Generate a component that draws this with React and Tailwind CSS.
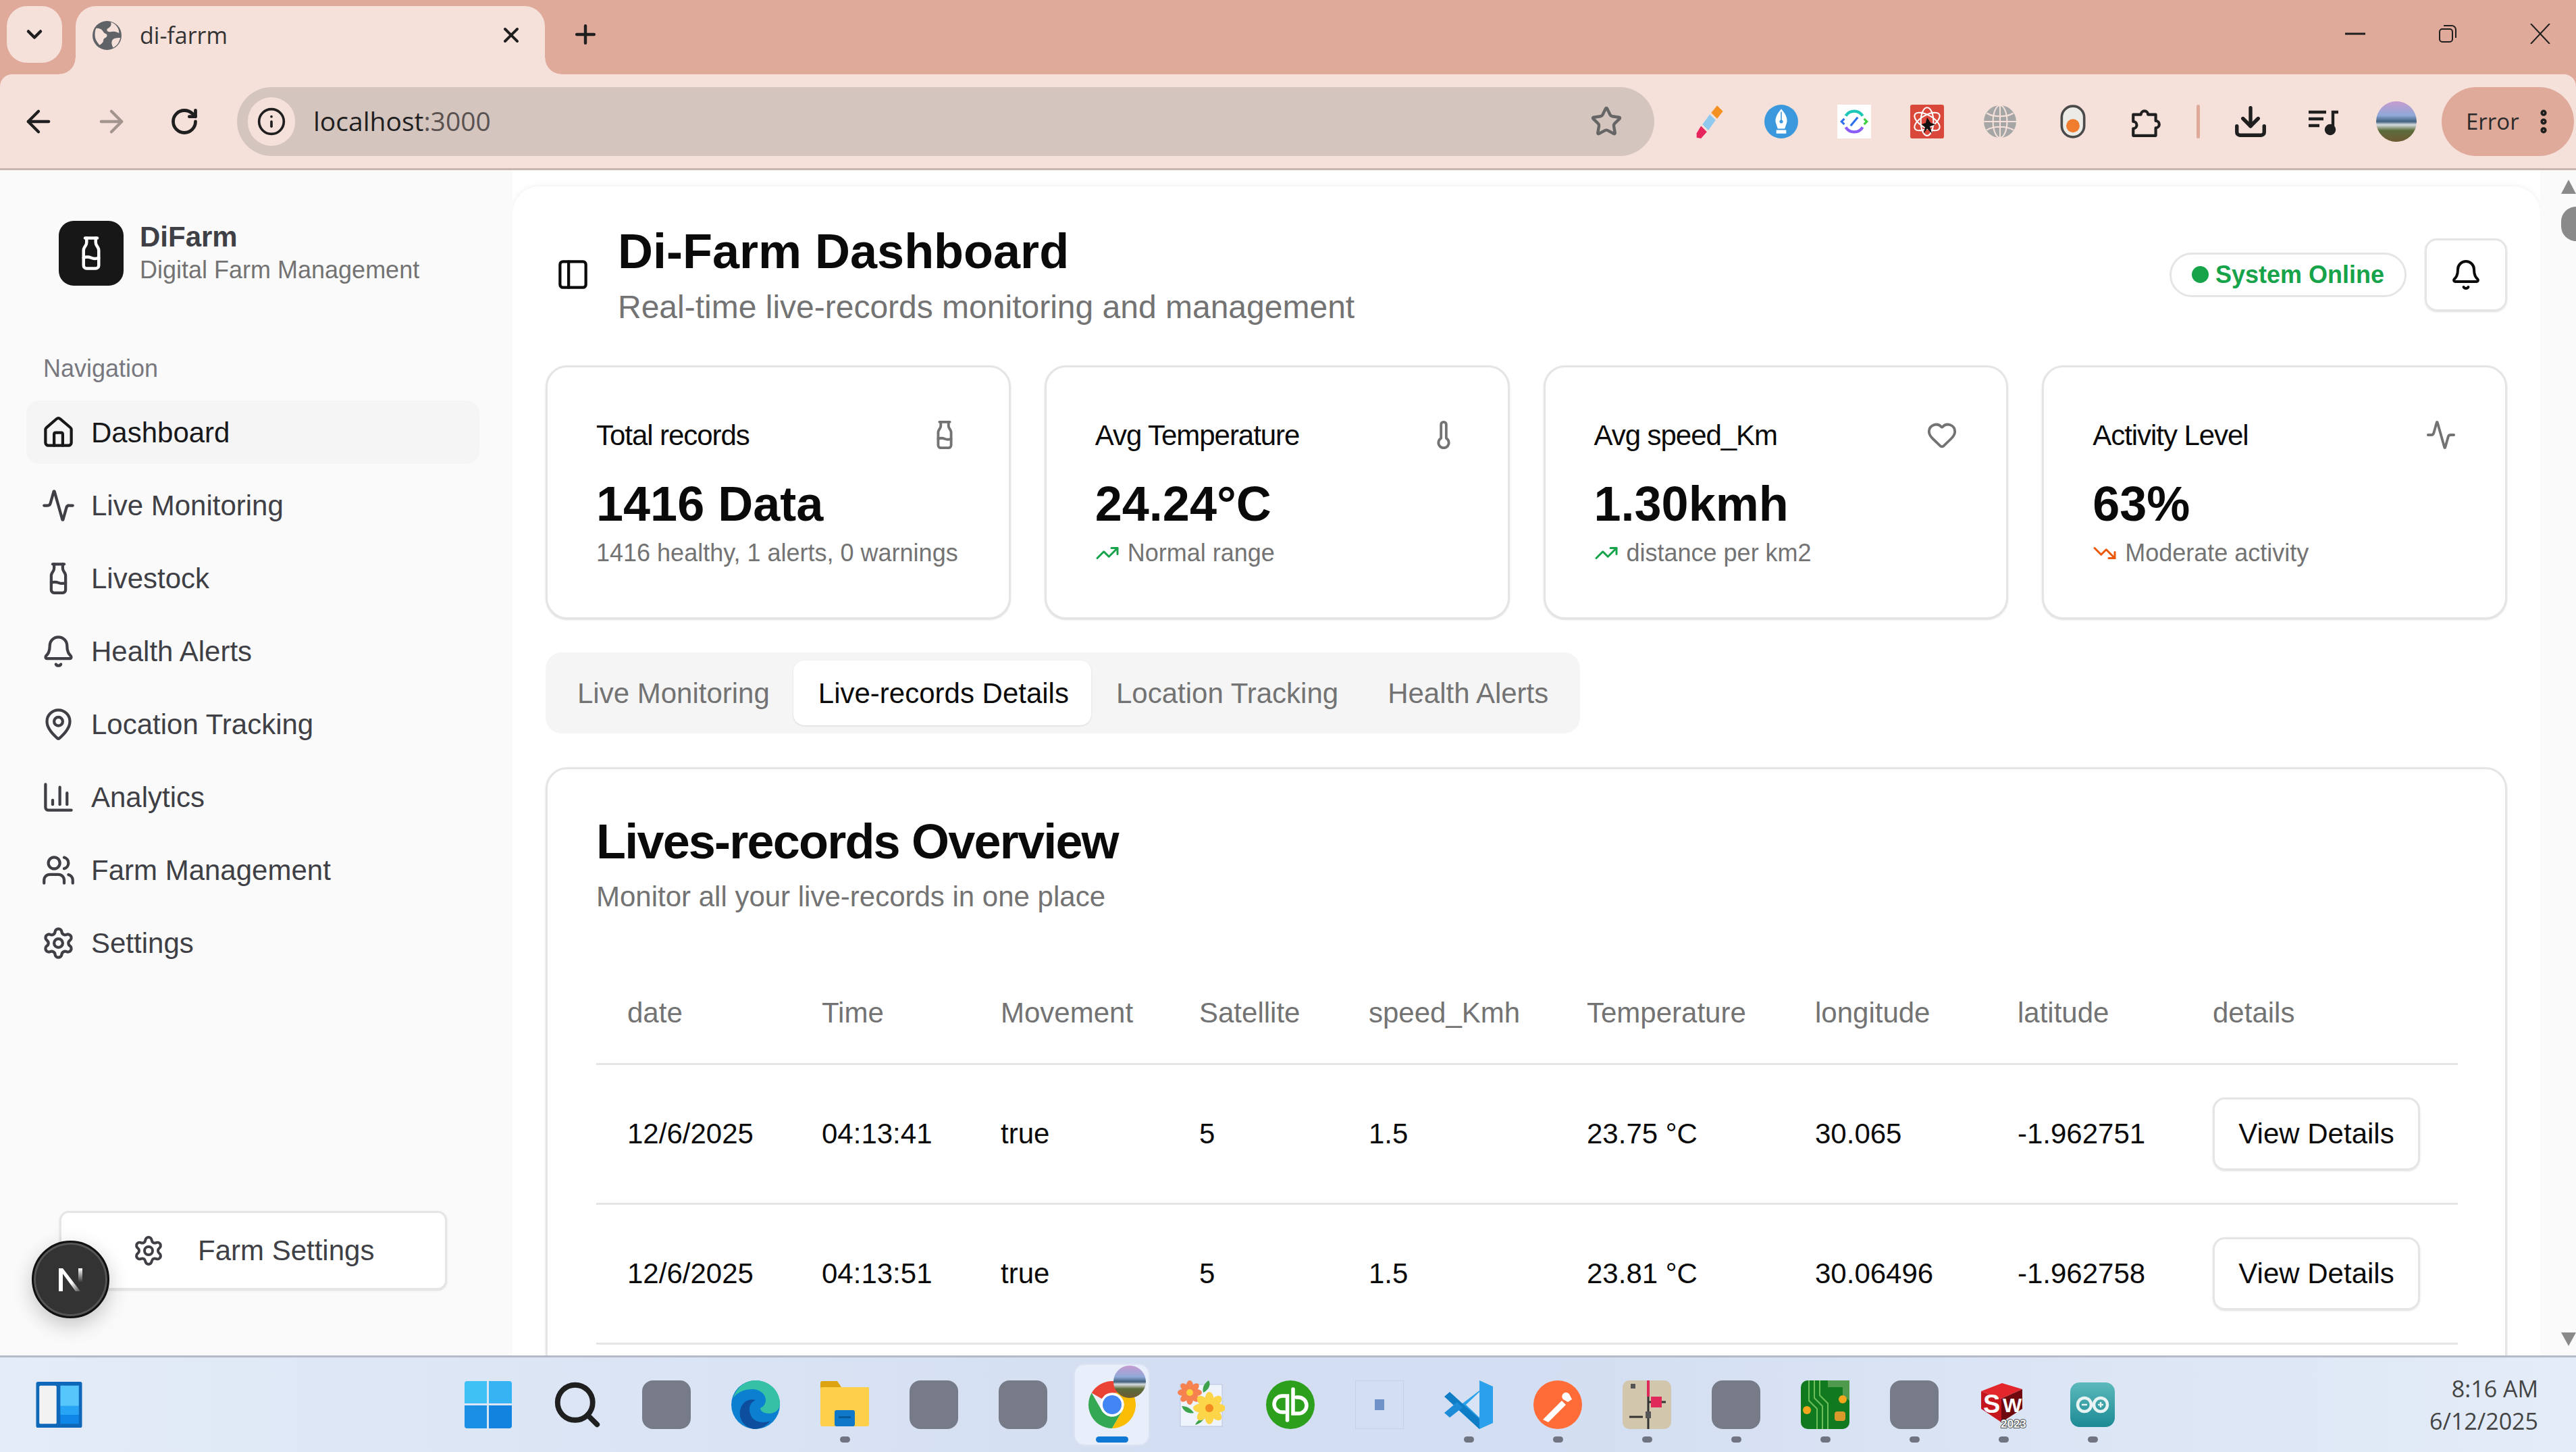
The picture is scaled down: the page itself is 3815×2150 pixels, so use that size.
import {
  Activity,
  ArrowLeft,
  ArrowRight,
  Bell,
  ChartColumn,
  ChevronDown,
  Download,
  EllipsisVertical,
  Heart,
  House,
  Info,
  MapPin,
  Milk,
  PanelLeft,
  Plus,
  RotateCw,
  Search,
  Settings,
  Star,
  Thermometer,
  TrendingDown,
  TrendingUp,
  Users,
  X,
} from "lucide-react";

const navItems = [
  { label: "Dashboard", icon: House, active: true },
  { label: "Live Monitoring", icon: Activity },
  { label: "Livestock", icon: Milk },
  { label: "Health Alerts", icon: Bell },
  { label: "Location Tracking", icon: MapPin },
  { label: "Analytics", icon: ChartColumn },
  { label: "Farm Management", icon: Users },
  { label: "Settings", icon: Settings },
];

const rows = [
  ["12/6/2025", "04:13:41", "true", "5", "1.5", "23.75 °C", "30.065", "-1.962751"],
  ["12/6/2025", "04:13:51", "true", "5", "1.5", "23.81 °C", "30.06496", "-1.962758"],
];

// chrome bits
const ChromeLogo = ({ className }) => (
  <svg viewBox="0 0 48 48" className={className}>
    <path d="M6.68 14A20 20 0 0 1 41.32 14H24A10 10 0 0 0 15.34 19Z" fill="#ea4335" />
    <path d="M6.68 14A20 20 0 0 0 24 44L32.66 29A10 10 0 0 1 15.34 29Z" fill="#34a853" />
    <path d="M41.32 14A20 20 0 0 1 24 44L32.66 29A10 10 0 0 0 24 14Z" fill="#fbbc04" />
    <circle cx="24" cy="24" r="10" fill="#fff" />
    <circle cx="24" cy="24" r="8" fill="#4285f4" />
  </svg>
);

const Avatar = ({ className }) => (
  <div className={`rounded-full bg-[linear-gradient(180deg,#c69bd0_0%,#8fa9d8_35%,#40607c_50%,#d8dde0_58%,#5b6b3a_72%,#6f5a33_100%)] ${className}`} />
);

const Globe = () => (
  <svg viewBox="0 0 24 24" className="h-[43px] w-[43px]">
    <circle cx="12" cy="12" r="12" fill="#5f6368" />
    <path d="M3 6c3 0 5 1 6 3s3 1 3 3-3 2-3 4-2 3-3 4c-2-2-4-5-4-8 0-2 0-4 1-6ZM15 1c1 2 0 4-2 5s-1 3 1 3 4-1 8 1c0-4-3-8-7-9ZM17 15c2-1 4-1 6-1-1 4-3 7-6 8-1-2-2-5 0-7Z" fill="#f5e0da" />
  </svg>
);

const WindowMark = ({ children }) => (
  <svg viewBox="0 0 30 30" fill="none" stroke="#1f1f1f" strokeWidth="2" className="h-[30px] w-[30px]">
    {children}
  </svg>
);

const ExtSlot = ({ children }) => <div className="flex h-[108px] w-[108px] items-center justify-center">{children}</div>;

const BrowserBar = () => (
  <div className="bg-[#e0aa9a] font-['Open_Sans',sans-serif]">
    <div className="flex h-[110px] items-start">
      <div className="ml-[10px] mt-[9px] flex h-[84px] w-[82px] items-center justify-center rounded-[30px] bg-[#f5e0da]">
        <ChevronDown size={36} strokeWidth={3} className="text-[#1f1f1f]" />
      </div>
      <div className="relative ml-[20px] mt-[9px] flex h-[101px] w-[695px] items-center rounded-t-[30px] bg-[#f5e0da] pb-[15px] pl-[25px] pr-[32px]">
        <span className="absolute bottom-0 left-[-24px] h-[24px] w-[24px] bg-[radial-gradient(circle_at_0_0,#e0aa9a_23px,#f5e0da_24px)]" />
        <span className="absolute bottom-0 right-[-24px] h-[24px] w-[24px] bg-[radial-gradient(circle_at_100%_0,#e0aa9a_23px,#f5e0da_24px)]" />
        <Globe />
        <span className="ml-[27px] text-[34px] leading-none text-[#333]">di-farrm</span>
        <X size={36} strokeWidth={2.6} className="ml-auto text-[#1f1f1f]" />
      </div>
      <Plus size={44} strokeWidth={2.4} className="ml-[38px] mt-[29px] text-[#1f1f1f]" />
      <div className="ml-auto mt-[35px] flex items-center gap-[107px] pr-[38px]">
        <WindowMark>
          <path d="M0 15h30" strokeWidth="3" />
        </WindowMark>
        <WindowMark>
          <rect x="3" y="8" width="19" height="19" rx="4" />
          <path d="M9 3h12a6 6 0 0 1 6 6v12" />
        </WindowMark>
        <WindowMark>
          <path d="M1 0l28 30M29 0 1 30" />
        </WindowMark>
      </div>
    </div>
    <div className="flex h-[142px] items-center rounded-t-[18px] border-b-[3px] border-[#c9b5b0] bg-[#f5e0da] pl-[3px]">
      <ExtSlot>
        <ArrowLeft size={52} strokeWidth={2} className="text-[#1f1f1f]" />
      </ExtSlot>
      <ExtSlot>
        <ArrowRight size={52} strokeWidth={2} className="text-[#a39490]" />
      </ExtSlot>
      <ExtSlot>
        <RotateCw size={44} strokeWidth={2.6} className="text-[#1f1f1f]" />
      </ExtSlot>
      <div className="ml-[24px] flex h-[102px] w-[2099px] items-center rounded-full bg-[#d5c5bf] pl-[16px] pr-[47px]">
        <div className="flex h-[72px] w-[70px] items-center justify-center rounded-full bg-[#f5e0da]">
          <Info size={44} strokeWidth={2} className="text-[#1f1f1f]" />
        </div>
        <span className="ml-[27px] text-[39px] text-[#1f1f1f]">
          localhost<span className="text-[#5a5250]">:3000</span>
        </span>
        <Star size={48} strokeWidth={2.2} className="ml-auto text-[#666]" />
      </div>
      <div className="ml-[26px] flex items-center">
        <ExtSlot>
          <svg viewBox="0 0 48 48" className="h-[52px] w-[52px]">
            <path d="M36 2l8 8-8 10-8-8Z" fill="#f59120" />
            <path d="M26 14l8 8-10 14-8-8Z" fill="#8fc9ee" />
            <path d="M14 30l8 8-8 9-6-1 0-6Z" fill="#e8245c" />
          </svg>
        </ExtSlot>
        <ExtSlot>
          <svg viewBox="0 0 48 48" className="h-[50px] w-[50px]">
            <circle cx="24" cy="24" r="24" fill="#3c98dd" />
            <path d="M24 6c6 7 9 13 8 19l-3 9H19l-3-9c-1-6 2-12 8-19Z" fill="#fff" />
            <rect x="17" y="36" width="14" height="5" fill="#fff" />
            <circle cx="24" cy="24" r="2.5" fill="#3c98dd" />
            <path d="M24 10v12" stroke="#3c98dd" strokeWidth="1.5" />
          </svg>
        </ExtSlot>
        <ExtSlot>
          <svg viewBox="0 0 48 48" className="h-[50px] w-[50px]">
            <rect width="48" height="48" fill="#fff" />
            <path d="M12 16a14 14 0 0 1 24 0" fill="none" stroke="#1fc7b6" strokeWidth="4" />
            <path d="M36 32a14 14 0 0 1-24 0" fill="none" stroke="#8b5cf6" strokeWidth="4" />
            <path d="M10 20l-4 4 4 4" fill="none" stroke="#2f6fed" strokeWidth="3" />
            <path d="M38 20l4 4-4 4" fill="none" stroke="#3dd13d" strokeWidth="3" />
            <path d="M19 30l10-12" stroke="#2f6fed" strokeWidth="3" />
          </svg>
        </ExtSlot>
        <ExtSlot>
          <svg viewBox="0 0 48 48" className="h-[50px] w-[50px]">
            <rect width="48" height="48" rx="3" fill="#d9483b" />
            <g fill="none" stroke="#fff" strokeWidth="2">
              <ellipse cx="24" cy="24" rx="9" ry="20" />
              <ellipse cx="24" cy="24" rx="9" ry="20" transform="rotate(60 24 24)" />
              <ellipse cx="24" cy="24" rx="9" ry="20" transform="rotate(-60 24 24)" />
            </g>
            <path d="M24 18l5 8 7 2-8 3 3 10-7-7-5 7 2-9-5-4 6-2Z" fill="#111" />
          </svg>
        </ExtSlot>
        <ExtSlot>
          <svg viewBox="0 0 48 48" className="h-[50px] w-[50px]">
            <circle cx="24" cy="24" r="23" fill="#a6a6a6" />
            <g fill="none" stroke="#f5e0da" strokeWidth="2">
              <ellipse cx="24" cy="24" rx="10" ry="23" />
              <path d="M24 1v46M1 24h46M5 12c10 6 28 6 38 0M5 36c10-6 28-6 38 0" />
            </g>
          </svg>
        </ExtSlot>
        <ExtSlot>
          <svg viewBox="0 0 48 48" className="h-[50px] w-[50px]">
            <rect x="8" y="2" width="32" height="44" rx="16" fill="#ecebe6" stroke="#4a4a4a" strokeWidth="3.5" />
            <circle cx="24" cy="30" r="9.5" fill="#ef7d2d" />
          </svg>
        </ExtSlot>
        <ExtSlot>
          <svg viewBox="0 0 24 24" fill="none" stroke="#1f1f1f" strokeWidth="2" strokeLinejoin="round" className="h-[50px] w-[50px]">
            <path d="M3 7h5.5a2.5 2.5 0 0 1 5 0H19v4.5a2.5 2.5 0 0 1 0 5V22H3v-5a2.5 2.5 0 0 0 0-5Z" />
          </svg>
        </ExtSlot>
        <div className="flex w-[47px] justify-center">
          <div className="h-[50px] w-[5px] rounded-full bg-[#e0aa9a]" />
        </div>
        <ExtSlot>
          <Download size={54} strokeWidth={2.4} className="text-[#1f1f1f]" />
        </ExtSlot>
        <ExtSlot>
          <svg viewBox="0 0 24 24" fill="none" stroke="#1f1f1f" strokeWidth="2.2" className="h-[48px] w-[48px]">
            <path d="M1 5h13M1 10h11M1 15h8M19 18V5h4" />
            <ellipse cx="17" cy="18" rx="3" ry="3" fill="#1f1f1f" />
          </svg>
        </ExtSlot>
        <ExtSlot>
          <Avatar className="h-[60px] w-[60px]" />
        </ExtSlot>
        <div className="ml-[13px] flex h-[102px] w-[196px] items-center rounded-full bg-[#e0aa9a] pl-[36px]">
          <span className="text-[33px] text-[#2a2a2a]">Error</span>
          <EllipsisVertical size={44} strokeWidth={3} className="ml-[14px] text-[#1f1f1f]" />
        </div>
      </div>
    </div>
  </div>
);

const Sidebar = () => (
  <aside className="relative flex w-[759px] shrink-0 flex-col bg-[#fafafa] pt-[74px]">
    <div className="ml-[87px] flex items-center gap-[24px]">
      <div className="flex h-[96px] w-[96px] items-center justify-center rounded-[22px] bg-[#171717]">
        <Milk size={54} strokeWidth={2} className="text-white" />
      </div>
      <div>
        <p className="text-[42px] font-bold leading-[50px] text-[#3f3f46]">DiFarm</p>
        <p className="text-[36px] leading-[48px] text-[#737373]">Digital Farm Management</p>
      </div>
    </div>
    <p className="ml-[64px] mt-[97px] text-[36px] leading-[50px] text-[#78787f]">Navigation</p>
    <nav className="ml-[39px] mt-[22px] flex w-[671px] flex-col gap-[14px]">
      {navItems.map(({ label, icon: Icon, active }) => (
        <div
          key={label}
          className={`flex h-[94px] items-center gap-[23px] rounded-[18px] pl-[22px] text-[42px] ${active ? "bg-[#f5f5f5] text-[#18181b]" : "text-[#3f3f46]"}`}
        >
          <Icon size={51} strokeWidth={2} />
          {label}
        </div>
      ))}
    </nav>
    <div className="mb-[97px] ml-[88px] mt-auto flex h-[117px] w-[574px] items-center gap-[49px] rounded-[14px] border-[3px] border-[#e5e5e5] bg-white pl-[105px] text-[42px] text-[#3f3f46] shadow-sm">
      <Settings size={48} strokeWidth={2} />
      Farm Settings
    </div>
    <div className="absolute bottom-[55px] left-[47px] flex h-[115px] w-[115px] items-center justify-center rounded-full border-[3px] border-[#111] bg-[#333] shadow-[inset_0_0_0_3px_#555,0_10px_30px_rgba(0,0,0,0.22)]">
      <svg viewBox="0 0 36 34" className="h-[34px] w-[36px]">
        <defs>
          <linearGradient id="nDiag" x1="0" y1="0" x2="1" y2="1">
            <stop offset="0.6" stopColor="#fff" />
            <stop offset="1" stopColor="#fff" stopOpacity="0.15" />
          </linearGradient>
          <linearGradient id="nStem" x1="0" y1="0" x2="0" y2="1">
            <stop offset="0" stopColor="#fff" />
            <stop offset="0.8" stopColor="#fff" stopOpacity="0" />
          </linearGradient>
        </defs>
        <path d="M0 0h6v34H0Z" fill="#fff" />
        <path d="M0 0h6l26 34h-7Z" fill="url(#nDiag)" />
        <rect x="29" width="6" height="26" fill="url(#nStem)" />
      </svg>
    </div>
  </aside>
);

const StatCard = ({ title, icon: Icon, value, trend, trendColor, note }) => (
  <div className="h-[376px] rounded-[32px] border-[3px] border-[#e5e5e5] bg-white px-[72px] pt-[76px] shadow-sm">
    <div className="flex h-[48px] items-center justify-between">
      <span className="text-[42px] tracking-tight text-[#0a0a0a]">{title}</span>
      <Icon size={46} strokeWidth={2} className="text-[#737373]" />
    </div>
    <p className="mt-[35px] text-[72px] font-bold leading-[86px] text-[#0a0a0a]">{value}</p>
    <div className="mt-[8px] flex h-[44px] items-center gap-[12px] text-[36px] text-[#737373]">
      {trend && <span className={trendColor}>{trend}</span>}
      {note}
    </div>
  </div>
);

const TopHeader = () => (
  <header className="flex h-[155px] items-center justify-between pl-[15px]">
    <div className="flex items-center gap-[41px]">
      <PanelLeft size={51} strokeWidth={2} className="text-[#0a0a0a]" />
      <div>
        <h1 className="text-[72px] font-bold leading-[86px] text-[#0a0a0a]">Di-Farm Dashboard</h1>
        <p className="mt-[11px] text-[48px] leading-[58px] text-[#737373]">Real-time live-records monitoring and management</p>
      </div>
    </div>
    <div className="flex items-center gap-[27px]">
      <div className="flex h-[66px] w-[351px] items-center justify-center gap-[10px] rounded-full border-[3px] border-[#e5e5e5] text-[36px] font-bold text-[#16a34a]">
        <span className="h-[25px] w-[25px] rounded-full bg-[#16a34a]" />
        System Online
      </div>
      <div className="flex h-[108px] w-[122px] items-center justify-center rounded-[18px] border-[3px] border-[#e5e5e5] shadow-sm">
        <Bell size={48} strokeWidth={2} className="text-[#0a0a0a]" />
      </div>
    </div>
  </header>
);

const Tabs = () => (
  <div className="mt-[49px] flex h-[120px] w-fit items-center rounded-[24px] bg-[#f5f5f5] px-[10px] text-[42px] text-[#737373]">
    <span className="pl-[37px] pr-[35px]">Live Monitoring</span>
    <span className="flex h-[96px] items-center rounded-[16px] bg-white pl-[37px] pr-[33px] text-[#0a0a0a] shadow-sm">Live-records Details</span>
    <span className="pl-[37px] pr-[37px]">Location Tracking</span>
    <span className="pl-[36px] pr-[37px]">Health Alerts</span>
  </div>
);

const RecordsCard = () => (
  <section className="mt-[50px] rounded-[32px] border-[3px] border-[#e5e5e5] bg-white px-[72px] pb-[72px] pt-[64px] shadow-sm">
    <h2 className="text-[72px] font-bold leading-[86px] tracking-tight text-[#0a0a0a]">Lives-records Overview</h2>
    <p className="mt-[14px] text-[42px] leading-[50px] text-[#737373]">Monitor all your live-records in one place</p>
    <table className="mt-[72px] w-[2757px] table-fixed text-left text-[42px]">
      <thead>
        <tr className="h-[150px] border-b-[3px] border-[#e5e5e5] text-[#737373]">
          <th className="w-[288px] pl-[46px] font-normal">date</th>
          <th className="w-[265px] pl-[46px] font-normal">Time</th>
          <th className="w-[294px] pl-[46px] font-normal">Movement</th>
          <th className="w-[251px] pl-[46px] font-normal">Satellite</th>
          <th className="w-[323px] pl-[46px] font-normal">speed_Kmh</th>
          <th className="w-[338px] pl-[46px] font-normal">Temperature</th>
          <th className="w-[300px] pl-[46px] font-normal">longitude</th>
          <th className="w-[289px] pl-[46px] font-normal">latitude</th>
          <th className="w-[409px] pl-[46px] font-normal">details</th>
        </tr>
      </thead>
      <tbody className="text-[#0a0a0a]">
        {rows.map((row) => (
          <tr key={row[1]} className="h-[207px] border-b-[3px] border-[#e5e5e5]">
            {row.map((cell, i) => (
              <td key={i} className="pl-[46px]">{cell}</td>
            ))}
            <td className="pl-[46px]">
              <div className="flex h-[108px] w-[307px] items-center justify-center rounded-[18px] border-[3px] border-[#e5e5e5] shadow-sm">View Details</div>
            </td>
          </tr>
        ))}
      </tbody>
    </table>
  </section>
);

const ScrollRail = () => (
  <div className="flex flex-1 flex-col items-end bg-[#fafafa] pt-[14px]">
    <div className="h-0 w-0 border-x-[11px] border-b-[21px] border-x-transparent border-b-[#8a8a8a]" />
    <div className="mt-[19px] h-[51px] w-[22px] rounded-l-full bg-[#8a8a8a]" />
    <div className="mt-auto mb-[14px] h-0 w-0 border-x-[11px] border-t-[20px] border-x-transparent border-t-[#8a8a8a]" />
  </div>
);

const GrayApp = () => <div className="h-[72px] w-[72px] rounded-[16px] bg-[#777b87]" />;

const petalAngles = [0, 45, 90, 135, 180, 225, 270, 315];

const taskbarApps = [
  {
    id: "start",
    node: (
      <svg viewBox="0 0 72 72" className="h-[72px] w-[70px]">
        <path d="M0 4a4 4 0 0 1 4-4h30v34H0Z" fill="#3fc1f6" />
        <path d="M37 0h31a4 4 0 0 1 4 4v30H37Z" fill="#35b3f2" />
        <path d="M0 37h34v35H4a4 4 0 0 1-4-4Z" fill="#1b8fe3" />
        <path d="M37 37h35v31a4 4 0 0 1-4 4H37Z" fill="#1283de" />
      </svg>
    ),
  },
  { id: "search", node: <Search size={78} strokeWidth={2.4} className="text-[#1f1f1f]" /> },
  { id: "gray1", node: <GrayApp /> },
  {
    id: "edge",
    node: (
      <svg viewBox="0 0 72 72" className="h-[72px] w-[72px]">
        <circle cx="36" cy="36" r="36" fill="#0c7fd0" />
        <path d="M3 26C8 10 21 0 36 0c20 0 36 15 36 34 0 10-8 15-16 15-7 0-13-3-13-8 5-2 8-7 8-12 0-9-9-16-20-16C20 13 9 17 3 26Z" fill="#35c1a5" />
        <path d="M34 72C19 70 9 56 14 41c3-9 12-15 22-12-8 4-11 11-8 20 3 11 15 16 30 11-6 7-14 12-24 12Z" fill="#0d4f9e" />
      </svg>
    ),
  },
  {
    id: "files",
    dot: true,
    node: (
      <svg viewBox="0 0 72 72" className="h-[72px] w-[72px]">
        <path d="M0 4a3 3 0 0 1 3-3h22l6 9h38a3 3 0 0 1 3 3v12H0Z" fill="#dba410" />
        <rect y="10" width="72" height="58" rx="3" fill="#fdcf4a" />
        <rect x="21" y="44" width="30" height="24" rx="3" fill="#0f78c8" />
        <rect x="27" y="53" width="18" height="3" fill="#075a9a" />
      </svg>
    ),
  },
  { id: "gray2", node: <GrayApp /> },
  { id: "gray3", node: <GrayApp /> },
  {
    id: "chrome",
    active: true,
    node: (
      <div className="relative">
        <ChromeLogo className="h-[84px] w-[84px]" />
        <Avatar className="absolute right-[-8px] top-[-16px] h-[48px] w-[48px]" />
      </div>
    ),
  },
  {
    id: "photos",
    node: (
      <svg viewBox="0 0 70 72" className="h-[72px] w-[70px]">
        <rect x="4" y="6" width="62" height="62" fill="#eef3fc" stroke="#b6c3de" strokeWidth="1" />
        <path d="M46 0c4 6 0 14-8 18-2-8 2-14 8-18ZM6 38c8 0 14 4 18 10-8 2-15-2-18-10ZM26 66c2-6 8-10 14-12-2 6-7 10-14 12Z" fill="#3fa34d" />
        {petalAngles.map((a) => (
          <ellipse key={a} cx="18" cy="8" rx="5" ry="8" fill="#f5824f" transform={`rotate(${a} 18 18)`} />
        ))}
        <circle cx="18" cy="18" r="5" fill="#fbd33a" />
        {petalAngles.map((a) => (
          <ellipse key={a} cx="47" cy="28" rx="6.5" ry="11" fill="#fdd548" transform={`rotate(${a} 47 41)`} />
        ))}
        <circle cx="47" cy="41" r="6" fill="#f48a22" />
      </svg>
    ),
  },
  {
    id: "qb",
    node: (
      <svg viewBox="0 0 72 72" className="h-[72px] w-[72px]">
        <circle cx="36" cy="36" r="36" fill="#2ca01c" />
        <g fill="none" stroke="#fff" strokeWidth="5.5" strokeLinecap="round">
          <path d="M31.5 59V23H24a12 12 0 0 0 0 24h3" />
          <path d="M40 13v36h8a12 12 0 0 0 0-24h-3" />
        </g>
      </svg>
    ),
  },
  {
    id: "blank",
    node: (
      <div className="flex h-[72px] w-[72px] items-center justify-center border border-[#c6d0e6]">
        <div className="h-[16px] w-[14px] bg-[#6f93c9]" />
      </div>
    ),
  },
  {
    id: "vscode",
    dot: true,
    node: (
      <svg viewBox="0 0 72 72" className="h-[72px] w-[72px]">
        <path d="M52 0l20 9v54l-20 9-34-31 34-26Z" fill="#2aa1ea" />
        <path d="M52 0v72L0 24l8-7 44 40V0Z" fill="#0f7cc6" />
        <path d="M0 48l8 7 19-15-8-8Z" fill="#1d8cd8" />
        <path d="M52 17 32 36l20 19Z" fill="#d8e4f5" />
      </svg>
    ),
  },
  {
    id: "postman",
    dot: true,
    node: (
      <svg viewBox="0 0 72 72" className="h-[72px] w-[72px]">
        <circle cx="36" cy="36" r="36" fill="#ff6c37" />
        <path d="M14 58 42 30l6 6-26 26ZM44 28a6 6 0 1 1 10-6l3 6-6 4Z" fill="#fff" />
      </svg>
    ),
  },
  {
    id: "fritzing",
    dot: true,
    node: (
      <svg viewBox="0 0 72 72" className="h-[72px] w-[72px]">
        <rect width="72" height="72" rx="10" fill="#d2c6ac" />
        <path d="M38 0v24" stroke="#e0285a" strokeWidth="4" />
        <path d="M38 24v48M10 54h20M38 32h26" stroke="#333" strokeWidth="3" />
        <rect x="42" y="24" width="16" height="16" fill="#e0285a" />
        <rect x="12" y="5" width="7" height="7" fill="#555" />
        <rect x="34" y="46" width="8" height="10" fill="#555" />
      </svg>
    ),
  },
  { id: "gray4", dot: true, node: <GrayApp /> },
  {
    id: "pcb",
    dot: true,
    node: (
      <svg viewBox="0 0 72 72" className="h-[72px] w-[72px]">
        <rect width="72" height="72" rx="10" fill="#117a1f" />
        <path d="M40 0h32v30l-10-8V10H40Z" fill="#4f9a4c" />
        <path d="M12 0v30l12 12v30M20 0v26l12 12v34M28 0v22l12 12v38" stroke="#6bbd5a" strokeWidth="2" fill="none" />
        <circle cx="62" cy="28" r="6" fill="#f4a61c" />
        <circle cx="9" cy="44" r="6" fill="#f4a61c" />
        <rect x="50" y="46" width="16" height="14" rx="4" fill="#d99a2b" />
      </svg>
    ),
  },
  { id: "gray5", dot: true, node: <GrayApp /> },
  {
    id: "sw",
    dot: true,
    node: (
      <svg viewBox="0 0 72 72" className="h-[72px] w-[72px] font-['Liberation_Sans',sans-serif] font-bold">
        <path d="M3 16 34 4l30 9-31 14Z" fill="#e3262c" />
        <path d="M3 16l30 11v35L3 42Z" fill="#c4161c" />
        <path d="M33 27 64 13v29L33 62Z" fill="#70090d" />
        <text x="6" y="48" fontSize="38" fill="#fff">S</text>
        <text x="35" y="47" fontSize="30" fill="#fff">W</text>
        <text x="32" y="70" fontSize="17" fill="#fff" stroke="#222" strokeWidth="1.5" paintOrder="stroke">2023</text>
      </svg>
    ),
  },
  {
    id: "arduino",
    dot: true,
    node: (
      <svg viewBox="0 0 66 66" className="h-[66px] w-[66px]">
        <defs>
          <linearGradient id="ardBg" x1="0" y1="0" x2="0" y2="1">
            <stop offset="0" stopColor="#5cb9bb" />
            <stop offset="1" stopColor="#1c8a94" />
          </linearGradient>
        </defs>
        <rect width="66" height="66" rx="14" fill="url(#ardBg)" />
        <g fill="none" stroke="#e8f4f4" strokeWidth="4.5">
          <circle cx="21" cy="33" r="10" />
          <circle cx="45" cy="33" r="10" />
        </g>
        <path d="M17 33h8M41 33h8M45 29v8" stroke="#e8f4f4" strokeWidth="2.5" />
      </svg>
    ),
  },
];

const Taskbar = () => (
  <footer className="flex h-[143px] shrink-0 items-center border-t-[3px] border-[#b5bac8] bg-[linear-gradient(90deg,#e3ecf7_0%,#d3def2_45%,#d3def2_60%,#e3ecf7_100%)] font-['Open_Sans',sans-serif]">
    <svg viewBox="0 0 72 72" className="ml-[51px] h-[68px] w-[73px]">
      <rect width="72" height="72" rx="3" fill="#0e67b8" />
      <rect x="5" y="6" width="27" height="60" rx="2" fill="#f2f2f2" />
      <rect x="38" y="6" width="29" height="32" fill="#56c6fb" />
      <rect x="38" y="38" width="29" height="14" fill="#27a5f4" />
      <rect x="38" y="52" width="29" height="14" fill="#0f86e8" />
    </svg>
    <div className="ml-[533px] flex items-center">
      {taskbarApps.map((app) => (
        <div key={app.id} className="relative flex h-[118px] w-[132px] items-center justify-center">
          {app.active && <span className="absolute inset-y-0 left-[11px] w-[109px] rounded-[14px] bg-[#e8eefa] shadow-[0_0_0_2px_#dbe3f3]" />}
          <div className="relative flex items-center justify-center">{app.node}</div>
          {app.dot && <span className="absolute bottom-[3px] h-[9px] w-[15px] rounded-full bg-[#6f7480]" />}
          {app.active && <span className="absolute bottom-[3px] h-[9px] w-[48px] rounded-full bg-[#0f78d4]" />}
        </div>
      ))}
    </div>
    <div className="ml-auto pr-[56px] text-right text-[34px] leading-[48px] text-[#444]">
      <p>8:16 AM</p>
      <p>6/12/2025</p>
    </div>
  </footer>
);

export default function App() {
  return (
    <div className="flex h-[2150px] w-[3815px] flex-col overflow-hidden bg-white font-['Liberation_Sans',sans-serif]">
      <BrowserBar />
      <div className="flex min-h-0 flex-1">
        <Sidebar />
        <main className="mt-[24px] w-[3003px] shrink-0 overflow-hidden rounded-t-[40px] bg-white pl-[49px] pr-[49px] pt-[53px] shadow-[0_0_8px_rgba(0,0,0,0.08)]">
          <TopHeader />
          <div className="mt-[57px] grid grid-cols-4 gap-[50px]">
            <StatCard title="Total records" icon={Milk} value="1416 Data" note="1416 healthy, 1 alerts, 0 warnings" />
            <StatCard title="Avg Temperature" icon={Thermometer} value="24.24°C" trend={<TrendingUp size={36} strokeWidth={2} />} trendColor="text-[#16a34a]" note="Normal range" />
            <StatCard title="Avg speed_Km" icon={Heart} value="1.30kmh" trend={<TrendingUp size={36} strokeWidth={2} />} trendColor="text-[#16a34a]" note="distance per km2" />
            <StatCard title="Activity Level" icon={Activity} value="63%" trend={<TrendingDown size={36} strokeWidth={2} />} trendColor="text-[#ea580c]" note="Moderate activity" />
          </div>
          <Tabs />
          <RecordsCard />
        </main>
        <ScrollRail />
      </div>
      <Taskbar />
    </div>
  );
}
